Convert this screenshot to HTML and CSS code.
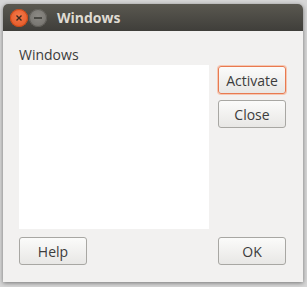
FILE: index.html
```html
<!DOCTYPE html>
<html lang="en">
<head>
    <meta charset="UTF-8" />
    <title>Windows</title>
    <link rel="stylesheet" href="styles.css">
</head>
<body>
    <div class="window">
        <div class="titlebar">
            <span class="ctl ctl-close">
                <svg width="8" height="8" viewBox="0 0 8 8"><path d="M1.5 1.5 L6.5 6.5 M6.5 1.5 L1.5 6.5" stroke="#3a2a20" stroke-width="1.4"/></svg>
            </span>
            <span class="ctl ctl-min">
                <svg width="10" height="4" viewBox="0 0 10 4"><path d="M1 2 H9" stroke="#3c3b37" stroke-width="1.6"/></svg>
            </span>
            <span class="title">Windows</span>
        </div>
        <div class="content">
            <div class="label">Windows</div>
            <div class="main">
                <div class="list"></div>
                <div class="side">
                    <button class="btn btn-default">Activate</button>
                    <button class="btn">Close</button>
                </div>
            </div>
            <div class="footer">
                <button class="btn">Help</button>
                <button class="btn">OK</button>
            </div>
        </div>
    </div>
</body>
</html>
```

FILE: styles.css
```css
body {
    margin: 0;
    width: 307px;
    height: 287px;
    background: #d6d6d6;
    font-family: "Open Sans", "DejaVu Sans", sans-serif;
    overflow: hidden;
}
.window {
    width: 300px;
    margin: 4px 0 0 3px;
    border-radius: 5px 5px 0 0;
    background: #f2f1f0;
    box-shadow: 0 1px 4px rgba(0, 0, 0, 0.45);
}
.titlebar {
    height: 27px;
    display: flex;
    align-items: center;
    padding-left: 7px;
    border-radius: 5px 5px 0 0;
    background: linear-gradient(#5a5850, #3f3e3a);
}
.ctl {
    width: 18px;
    height: 18px;
    border-radius: 50%;
    display: flex;
    align-items: center;
    justify-content: center;
}
.ctl-close {
    background: radial-gradient(circle at 50% 40%, #f47a4a, #e0501f);
    box-shadow: inset 0 0 0 1px #c44818;
}
.ctl-min {
    margin-left: 1px;
    background: radial-gradient(circle at 50% 40%, #8c8a85, #6f6d68);
    box-shadow: inset 0 0 0 1px #5e5c57;
}
.title {
    margin-left: 10px;
    color: #dfdbd2;
    font-size: 14px;
    font-weight: bold;
}
.content {
    padding: 14px 17px 17px 16px;
}
.label {
    height: 20px;
    font-size: 14px;
    color: #3c3c3c;
    line-height: 20px;
}
.main {
    display: flex;
    gap: 9px;
}
.list {
    width: 190px;
    height: 164px;
    background: #ffffff;
}
.side {
    display: flex;
    flex-direction: column;
    gap: 6px;
    padding-top: 1px;
}
.btn {
    width: 68px;
    height: 28px;
    padding: 0;
    font-family: inherit;
    font-size: 14px;
    color: #3c3c3c;
    border: 1px solid #a8a7a3;
    border-radius: 3px;
    background: linear-gradient(#fbfbfa, #e8e7e5);
}
.btn-default {
    border-color: #e87a50;
    box-shadow: 0 0 0 1px #f6c7b2;
}
.footer {
    display: flex;
    justify-content: space-between;
    margin-top: 8px;
}
```
